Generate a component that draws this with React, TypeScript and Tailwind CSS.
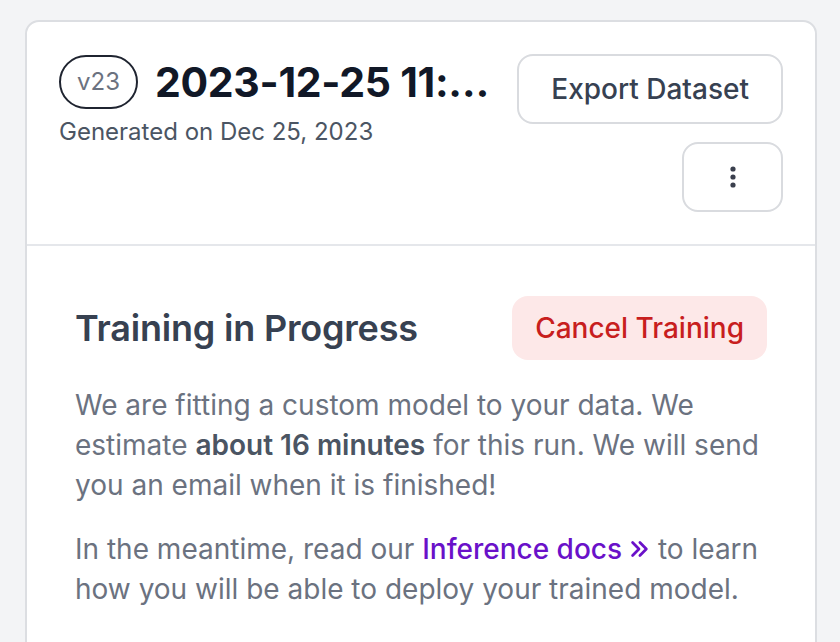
export default function App() {
  return (
    <div className="min-h-screen bg-[#f3f4f6] pl-[25px] pr-[23px] pt-[20px] font-['Inter','Liberation_Sans',sans-serif]">
      <div className="overflow-hidden rounded-t-[14px] border-2 border-[#dcdee2] bg-white">
        {/* Header */}
        <div className="flex items-start gap-[38px] border-b-2 border-[#e5e7eb] p-[32px]">
          <div className="min-w-0 flex-1">
            <div className="flex items-center gap-[17px]">
              <span className="flex h-[54px] shrink-0 items-center rounded-full border-2 border-[#1f2430] px-[16px] text-[24px] text-[#6b7280]">
                v23
              </span>
              <h1 className="whitespace-nowrap text-[41px] leading-[56px] font-bold tracking-[-0.3px] text-[#111827]">
                2023-12-25 11:…
              </h1>
            </div>
            <p className="mt-[6px] text-[24px] leading-[32px] text-[#4b5563]">Generated on Dec 25, 2023</p>
          </div>
          <div className="flex shrink-0 flex-col items-end gap-[18px]">
            <button className="h-[70px] rounded-[16px] border-2 border-[#d9dbdf] bg-white px-[32px] text-[28px] font-medium text-[#374151]">
              Export Dataset
            </button>
            <button className="flex h-[70px] w-[101px] items-center justify-center rounded-[16px] border-2 border-[#d9dbdf] bg-white">
              <svg width="6" height="22" viewBox="0 0 6 22" fill="#3a3f4d">
                <circle cx="3" cy="3" r="2.6" />
                <circle cx="3" cy="11" r="2.6" />
                <circle cx="3" cy="19" r="2.6" />
              </svg>
            </button>
          </div>
        </div>

        {/* Body */}
        <div className="px-[48px] pt-[50px] pb-[60px]">
          <div className="flex items-center justify-between">
            <h2 className="text-[36px] leading-[48px] font-semibold tracking-[-0.2px] text-[#374151]">
              Training in Progress
            </h2>
            <button className="h-[64px] rounded-[16px] bg-[#fde8e8] px-[23px] text-[28px] font-medium text-[#c81e1e]">
              Cancel Training
            </button>
          </div>
          <p className="mt-[25px] text-[28px] leading-[40px] text-[#6b7280]">
            We are fitting a custom model to your data. We estimate{" "}
            <span className="font-semibold text-[#4b5563]">about 16 minutes</span> for this run. We will send you an
            email when it is finished!
          </p>
          <p className="mt-[24px] text-[28px] leading-[40px] text-[#6b7280]">
            In the meantime, read our{" "}
            <a className="font-medium text-[#6a11c9]" href="#">
              Inference docs
              <svg
                className="ml-[6px] inline-block align-[-1px]"
                width="22"
                height="22"
                viewBox="0 0 24 24"
                fill="none"
                stroke="currentColor"
                strokeWidth="3"
                strokeLinecap="round"
                strokeLinejoin="round"
              >
                <path d="M5 5l7 7-7 7" />
                <path d="M13 5l7 7-7 7" />
              </svg>
            </a>{" "}
            to learn how you will be able to deploy your trained model.
          </p>
        </div>
      </div>
    </div>
  );
}
